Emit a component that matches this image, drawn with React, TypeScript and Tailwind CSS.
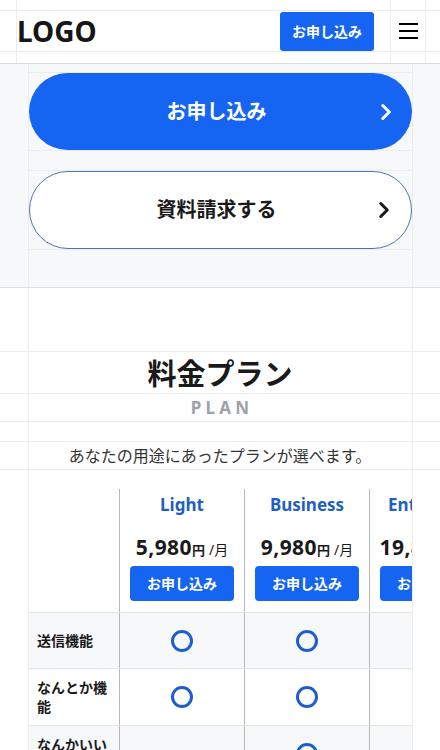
import { ChevronRight } from "lucide-react";

const plans = [
  { name: "Light", price: "5,980", marks: [true, true, false] },
  { name: "Business", price: "9,980", marks: [true, true, true] },
  { name: "Enterprise", price: "19,800", marks: [true, true, true] },
];

const features = ["送信機能", "なんとか機能", "なんかいい機能"];

const Circle = () => (
  <div className="h-[22px] w-[22px] rounded-full border-[3.5px] border-[#1c5ed1]"></div>
);

const App = () => {
  return (
    <div className="min-h-screen bg-white font-['Noto_Sans','Noto_Sans_CJK_JP',sans-serif] text-[#1a1a1a]">
      {/* Header */}
      <header className="border-b border-[#dcdcdc] bg-white pl-4 pr-[14px]">
        <div className="flex border-x border-[#ececec]">
          <div className="flex-1 pt-[10px] pb-[11px]">
            <div className="-ml-[17px] flex h-[42px] items-center justify-between border-y border-[#ececec] pl-[17px] pr-4">
              <p className="text-[28px] font-bold leading-none text-[#161616]">LOGO</p>
              <button className="h-[39px] rounded-[3px] bg-[#1664f2] px-3 text-[14px] font-bold text-white">
                お申し込み
              </button>
            </div>
          </div>
          <div className="w-[35px] border-l border-[#ececec] pt-[10px] pb-[11px]">
            <div className="-mr-[15px] flex h-[42px] items-center border-y border-[#ececec]">
              <div className="flex w-[34px] flex-col items-center gap-[5px]">
                <span className="h-[2px] w-[19px] bg-black"></span>
                <span className="h-[2px] w-[19px] bg-black"></span>
                <span className="h-[2px] w-[19px] bg-black"></span>
              </div>
            </div>
          </div>
        </div>
      </header>

      {/* CTA */}
      <section className="border-b border-[#e0e0e0] bg-[#f7f8fa]">
        <div className="ml-7 mr-[27px] border-x border-[#ececec] pt-[8px] pb-[37px]">
          <div className="border-y border-[#ececec]">
            <button className="relative flex h-[77px] w-full items-center justify-center rounded-full bg-[#1664f2] pr-2 text-[20px] font-bold text-white">
              お申し込み
              <ChevronRight size={26} strokeWidth={2.8} className="absolute right-[13px]" />
            </button>
          </div>
          <div className="mt-[19px] border-y border-[#ececec]">
            <button className="relative flex h-[78px] w-full items-center justify-center rounded-full border border-[#4f73b8] bg-white pr-2 text-[20px] font-bold text-[#1a1a1a]">
              資料請求する
              <ChevronRight size={26} strokeWidth={2.8} className="absolute right-[14px]" />
            </button>
          </div>
        </div>
      </section>

      {/* Plan */}
      <section className="bg-white">
        <div className="ml-7 mr-[27px] border-x border-[#ececec] pt-[63px]">
          <h2 className="-ml-[29px] -mr-[28px] h-[43px] border-y border-[#ececec] pt-[2px] text-center text-[29px] font-bold leading-[39px] text-[#1a1a1a]">
            料金プラン
          </h2>
          <p className="-ml-[29px] -mr-[28px] h-[28px] border-b border-[#ececec] pl-[4px] text-center text-[17px] font-bold leading-[27px] tracking-[0.25em] text-[#9da2aa]">
            PLAN
          </p>
          <p className="-ml-[29px] -mr-[28px] mt-[19px] h-[29px] border-y border-[#ececec] pt-[1px] text-center text-[16px] leading-[26px] text-[#333]">
            あなたの用途にあったプランが選べます。
          </p>

          <div className="mt-[19px] overflow-x-auto [scrollbar-width:none]">
            <div className="w-max">
              <div className="grid grid-cols-[90px_125px_125px_125px] bg-white">
                <div></div>
                {plans.map((p) => (
                  <div key={p.name} className="flex flex-col items-center border-l border-[#b8b8b8] px-2.5 pt-[4px] pb-[11px]">
                    <p className="h-6 text-[17px] font-bold leading-6 text-[#1f5fc4]">{p.name}</p>
                    <p className="mt-[16px] flex h-7 items-baseline whitespace-nowrap leading-7 text-[#1a1a1a]">
                      <span className="text-[21px] font-bold tracking-[0.02em]">{p.price}</span>
                      <span className="text-[13px] font-bold">円</span>
                      <span className="ml-[4px] text-[14px]">/月</span>
                    </p>
                    <button className="mt-[5px] h-[35px] w-full shrink-0 rounded-[4px] bg-[#1664f2] text-[14px] font-bold whitespace-nowrap text-white">
                      お申し込み
                    </button>
                  </div>
                ))}
              </div>

              {features.map((f, i) => (
                <div
                  key={f}
                  className={
                    i % 2 === 0
                      ? "grid grid-cols-[90px_125px_125px_125px] border-t border-[#e3e3e3] bg-[#f7f8fa]"
                      : "grid grid-cols-[90px_125px_125px_125px] border-t border-[#e3e3e3] bg-white"
                  }
                >
                  <div className="flex items-center px-2 py-[9px] text-[14px] font-bold leading-[19px] text-[#1a1a1a]">
                    {f}
                  </div>
                  {plans.map((p) => (
                    <div key={p.name} className="flex min-h-[55px] items-center justify-center border-l border-[#b8b8b8]">
                      {p.marks[i] && <Circle />}
                    </div>
                  ))}
                </div>
              ))}
            </div>
          </div>
        </div>
      </section>
    </div>
  );
};

export default App;
